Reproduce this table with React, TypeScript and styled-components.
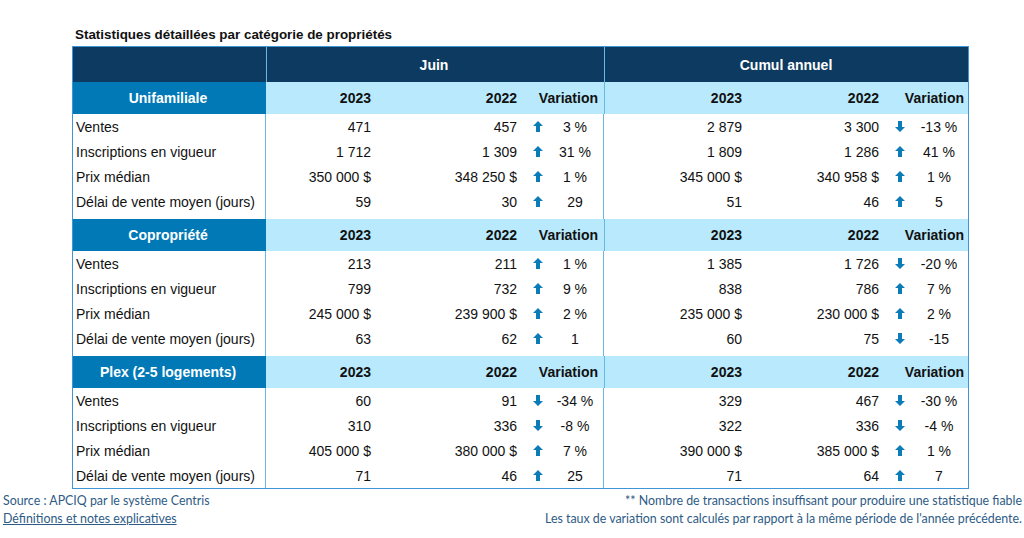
import React from 'react';
import styled, { createGlobalStyle } from 'styled-components';

const GlobalStyle = createGlobalStyle`
  html, body {
    margin: 0;
    padding: 0;
    background: #ffffff;
  }
  body {
    font-family: 'Liberation Sans', Arial, sans-serif;
    color: #111111;
  }
`;

const COLS = '193px 111px 146px 81px 144px 137px 85px';

const Page = styled.div`
  width: 1024px;
  height: 538px;
  padding-top: 27px;
  box-sizing: border-box;
  display: flex;
  flex-direction: column;
`;

const Title = styled.h2`
  margin: 0 0 3px 75px;
  font-size: 13.4px;
  line-height: 16px;
  font-weight: 700;
  color: #111111;
`;

const Table = styled.div`
  margin-left: 72px;
  width: 897px;
  border: 1px solid #3f96d6;
  box-sizing: border-box;
  display: flex;
  flex-direction: column;
`;

const Row = styled.div<{ $height: number; $bg?: string }>`
  display: grid;
  grid-template-columns: ${COLS};
  height: ${(p) => p.$height}px;
  background: ${(p) => p.$bg || 'transparent'};
`;

const Group = styled.div<{ $pad: number }>`
  display: flex;
  flex-direction: column;
  padding-bottom: ${(p) => p.$pad}px;
  background-image: linear-gradient(#6cb7e2, #6cb7e2), linear-gradient(#6cb7e2, #6cb7e2);
  background-size: 1px 100%, 1px 100%;
  background-position: 192px 0, 530px 0;
  background-repeat: no-repeat;
`;

const Cell = styled.div<{
  $align?: 'left' | 'right' | 'center';
  $bold?: boolean;
  $span?: number;
  $divider?: boolean;
  $bg?: string;
  $color?: string;
}>`
  grid-column: span ${(p) => p.$span || 1};
  display: flex;
  align-items: center;
  justify-content: ${(p) =>
    p.$align === 'left' ? 'flex-start' : p.$align === 'center' ? 'center' : 'flex-end'};
  padding: 0 6px 0 3px;
  font-size: 14px;
  font-weight: ${(p) => (p.$bold ? 700 : 400)};
  color: ${(p) => p.$color || '#111111'};
  background: ${(p) => p.$bg || 'transparent'};
  border-left: ${(p) => (p.$divider ? '1px solid #6cb7e2' : 'none')};
  white-space: nowrap;
  box-sizing: border-box;
`;

const VarCell = styled.div<{ $arrowW: number }>`
  display: grid;
  grid-template-columns: ${(p) => p.$arrowW}px 1fr;
  align-items: center;
  padding-right: 7px;
  font-size: 14px;
`;

const ArrowBox = styled.span`
  display: flex;
  justify-content: center;
  align-items: center;
`;

const VarValue = styled.span`
  text-align: center;
`;

const Footer = styled.div`
  display: flex;
  justify-content: space-between;
  padding: 3px 2px 0 3px;
  font-family: Lato, 'Open Sans', sans-serif;
  font-size: 12.4px;
  line-height: 18px;
  color: #2e5b85;
`;

const FootCol = styled.div<{ $right?: boolean }>`
  display: flex;
  flex-direction: column;
  align-items: ${(p) => (p.$right ? 'flex-end' : 'flex-start')};
`;

const FootLink = styled.a`
  color: #2e5b85;
  text-decoration: underline;
`;

const Arrow: React.FC<{ up: boolean }> = ({ up }) => (
  <svg width="10" height="11" viewBox="0 0 10 11" style={{ transform: up ? 'none' : 'rotate(180deg)' }}>
    <polygon points="5,0 10,5 7,5 7,11 3,11 3,5 0,5" fill="#0b7cb8" />
  </svg>
);

type Stat = { label: string; j: [string, string, string]; c: [string, string, string] };
type Section = { name: string; pad: number; rows: Stat[] };

const isUp = (v: string) => !v.trim().startsWith('-');

const sections: Section[] = [
  {
    name: 'Unifamiliale',
    pad: 5,
    rows: [
      { label: 'Ventes', j: ['471', '457', '3 %'], c: ['2 879', '3 300', '-13 %'] },
      { label: 'Inscriptions en vigueur', j: ['1 712', '1 309', '31 %'], c: ['1 809', '1 286', '41 %'] },
      { label: 'Prix médian', j: ['350 000 $', '348 250 $', '1 %'], c: ['345 000 $', '340 958 $', '1 %'] },
      { label: 'Délai de vente moyen (jours)', j: ['59', '30', '29'], c: ['51', '46', '5'] },
    ],
  },
  {
    name: 'Copropriété',
    pad: 5,
    rows: [
      { label: 'Ventes', j: ['213', '211', '1 %'], c: ['1 385', '1 726', '-20 %'] },
      { label: 'Inscriptions en vigueur', j: ['799', '732', '9 %'], c: ['838', '786', '7 %'] },
      { label: 'Prix médian', j: ['245 000 $', '239 900 $', '2 %'], c: ['235 000 $', '230 000 $', '2 %'] },
      { label: 'Délai de vente moyen (jours)', j: ['63', '62', '1'], c: ['60', '75', '-15'] },
    ],
  },
  {
    name: 'Plex (2-5 logements)',
    pad: 0,
    rows: [
      { label: 'Ventes', j: ['60', '91', '-34 %'], c: ['329', '467', '-30 %'] },
      { label: 'Inscriptions en vigueur', j: ['310', '336', '-8 %'], c: ['322', '336', '-4 %'] },
      { label: 'Prix médian', j: ['405 000 $', '380 000 $', '7 %'], c: ['390 000 $', '385 000 $', '1 %'] },
      { label: 'Délai de vente moyen (jours)', j: ['71', '46', '25'], c: ['71', '64', '7'] },
    ],
  },
];

const NAVY = '#0d3a60';
const MID = '#0079b6';
const LIGHT = '#b8e9fc';

const Variation: React.FC<{ value: string; arrowW: number }> = ({ value, arrowW }) => (
  <VarCell $arrowW={arrowW}>
    <ArrowBox>
      <Arrow up={isUp(value)} />
    </ArrowBox>
    <VarValue>{value}</VarValue>
  </VarCell>
);

export default function App() {
  return (
    <Page>
      <GlobalStyle />
      <Title>Statistiques détaillées par catégorie de propriétés</Title>
      <Table>
        <Row $height={35} $bg={NAVY}>
          <Cell />
          <Cell $span={3} $align="center" $bold $color="#ffffff" $divider>
            Juin
          </Cell>
          <Cell $span={3} $align="center" $bold $color="#ffffff" $divider>
            Cumul annuel
          </Cell>
        </Row>
        {sections.map((s) => (
          <React.Fragment key={s.name}>
            <Row $height={32} $bg={LIGHT}>
              <Cell $align="center" $bold $color="#ffffff" $bg={MID}>
                {s.name}
              </Cell>
              <Cell $bold>2023</Cell>
              <Cell $bold>2022</Cell>
              <Cell $bold>Variation</Cell>
              <Cell $bold $divider>2023</Cell>
              <Cell $bold>2022</Cell>
              <Cell $bold>Variation</Cell>
            </Row>
            <Group $pad={s.pad}>
              {s.rows.map((r) => (
                <Row key={r.label} $height={25}>
                  <Cell $align="left">{r.label}</Cell>
                  <Cell>{r.j[0]}</Cell>
                  <Cell>{r.j[1]}</Cell>
                  <Variation value={r.j[2]} arrowW={30} />
                  <Cell>{r.c[0]}</Cell>
                  <Cell>{r.c[1]}</Cell>
                  <Variation value={r.c[2]} arrowW={30} />
                </Row>
              ))}
            </Group>
          </React.Fragment>
        ))}
      </Table>
      <Footer>
        <FootCol>
          <span>Source : APCIQ par le système Centris</span>
          <FootLink href="#">Définitions et notes explicatives</FootLink>
        </FootCol>
        <FootCol $right>
          <span>** Nombre de transactions insuffisant pour produire une statistique fiable</span>
          <span>Les taux de variation sont calculés par rapport à la même période de l'année précédente.</span>
        </FootCol>
      </Footer>
    </Page>
  );
}
